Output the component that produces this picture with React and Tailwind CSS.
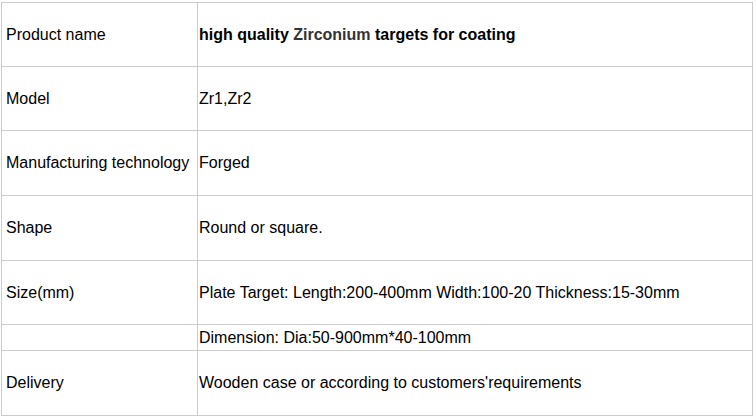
import React from 'react';

const rows = [
  { label: 'Product name', value: 'title', h: 'h-[64px]' },
  { label: 'Model', value: 'Zr1,Zr2', h: 'h-[64px]' },
  { label: 'Manufacturing technology', value: 'Forged', h: 'h-[65px]' },
  { label: 'Shape', value: 'Round or square.', h: 'h-[65px]' },
  { label: 'Size(mm)', value: 'Plate Target: Length:200-400mm Width:100-20 Thickness:15-30mm', h: 'h-[64px]' },
  { label: '', value: 'Dimension: Dia:50-900mm*40-100mm', h: 'h-[26px]' },
  { label: 'Delivery', value: "Wooden case or according to customers'requirements", h: 'h-[65px]' },
];

export default function App() {
  return (
    <div className="w-[756px] h-[418px] bg-white pt-[2px] pl-[1px] font-['Liberation_Sans',Arial,sans-serif] text-[16px] text-black">
      <div className="w-[752px] border-l border-t border-[#cccccc]">
        {rows.map((row, i) => (
          <div key={i} className={`flex ${row.h}`}>
            <div className="w-[196px] shrink-0 flex items-center pl-[4px] border-r border-b border-[#cccccc]">
              {row.label}
            </div>
            <div className="flex-1 flex items-center pl-[1px] border-r border-b border-[#cccccc]">
              {row.value === 'title' ? (
                <span className="font-bold">
                  high quality <span className="text-[#333333]">Zirconium</span> targets for coating
                </span>
              ) : (
                row.value
              )}
            </div>
          </div>
        ))}
      </div>
    </div>
  );
}
